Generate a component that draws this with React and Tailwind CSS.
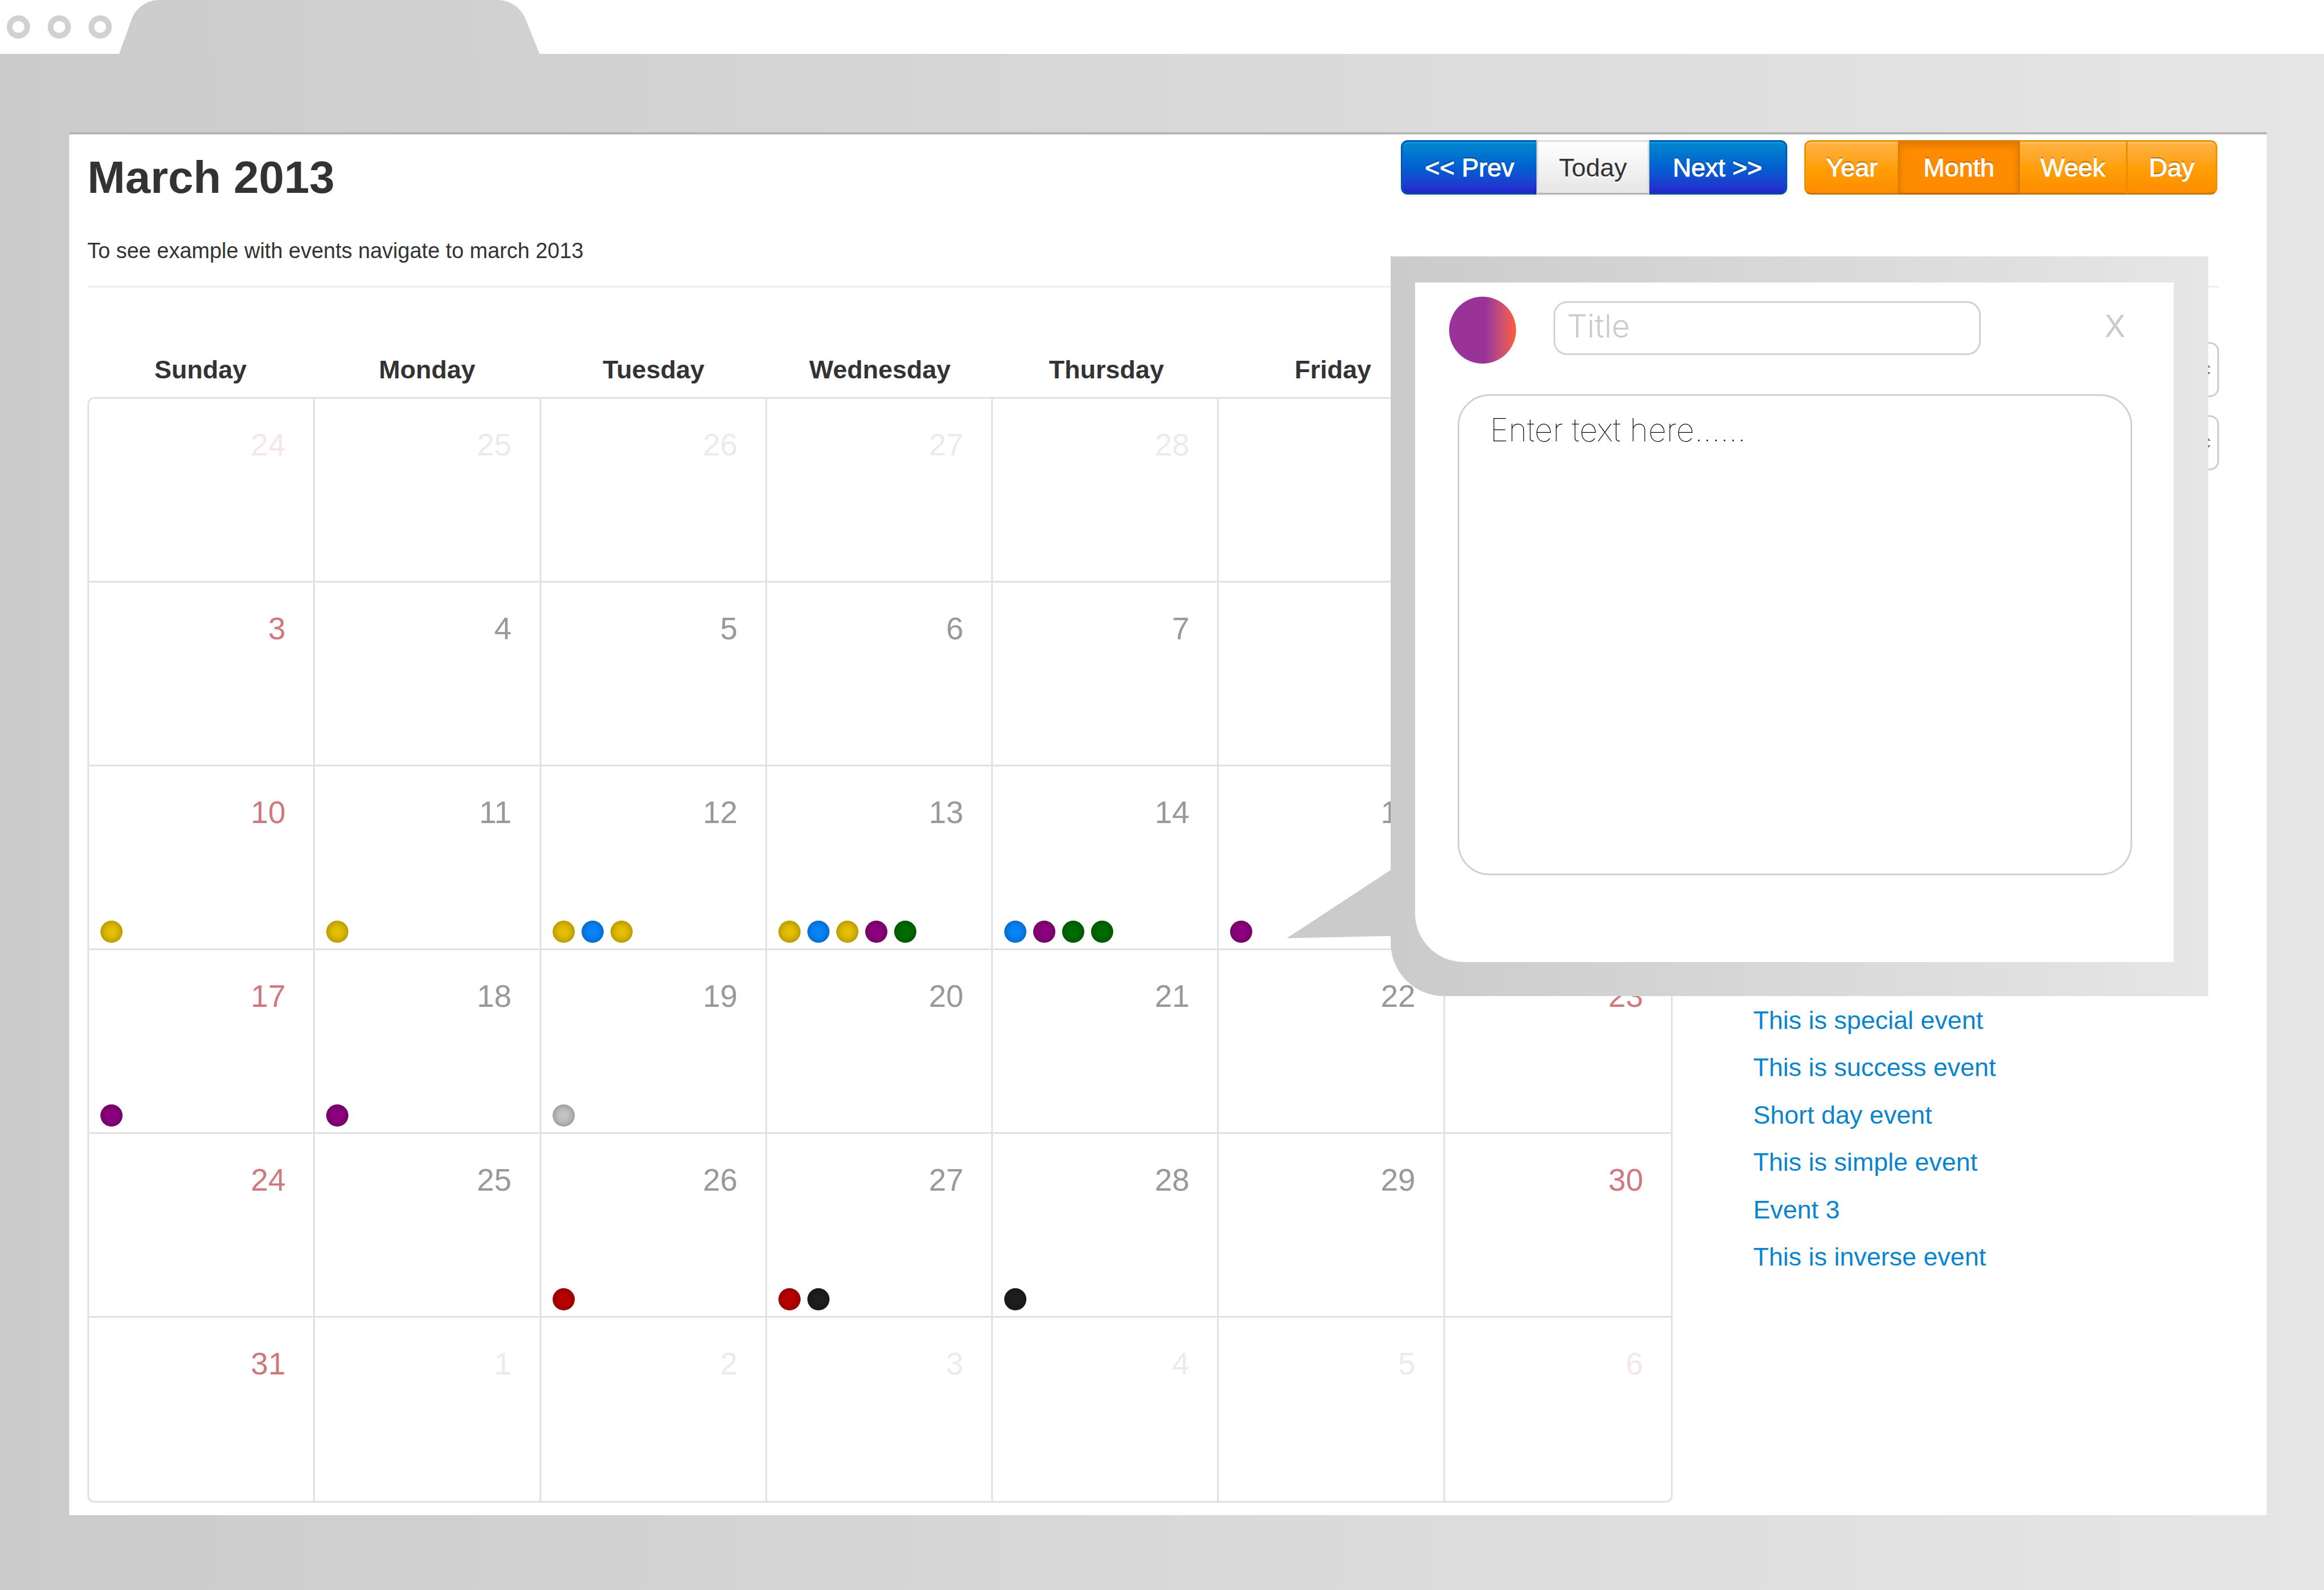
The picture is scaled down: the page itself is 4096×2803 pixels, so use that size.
const DAYS = ['Sunday', 'Monday', 'Tuesday', 'Wednesday', 'Thursday', 'Friday', 'Saturday'];

const DOT = {
  warning: 'bg-[#e9c200]',
  info: 'bg-[#0887ff]',
  special: 'bg-[#900080]',
  success: 'bg-[#006e00]',
  plain: 'bg-[#c7c7c7]',
  important: 'bg-[#bc0000]',
  inverse: 'bg-[#1f1f1f]',
};

const EVENTS = {
  10: ['warning'],
  11: ['warning'],
  12: ['warning', 'info', 'warning'],
  13: ['warning', 'info', 'warning', 'special', 'success'],
  14: ['info', 'special', 'success', 'success'],
  15: ['special'],
  17: ['special'],
  18: ['special'],
  19: ['plain'],
  26: ['important'],
  27: ['important', 'inverse'],
  28: ['inverse'],
};

// Six weeks starting on Sunday, 24 February 2013.
const WEEKS = Array.from({ length: 6 }, (_, w) =>
  Array.from({ length: 7 }, (_, d) => {
    const n = w * 7 + d - 4;
    const outside = n < 1 || n > 31;
    return {
      label: n < 1 ? n + 28 : n > 31 ? n - 31 : n,
      outside,
      weekend: d === 0 || d === 6,
      dots: outside ? [] : EVENTS[n] || [],
    };
  }),
);

const LINKS = [
  'This is special event',
  'This is success event',
  'Short day event',
  'This is simple event',
  'Event 3',
  'This is inverse event',
];

function numberColor({ outside, weekend }) {
  if (outside) return weekend ? 'text-[#f6e6e7]' : 'text-[#ebebeb]';
  return weekend ? 'text-[#d0787d]' : 'text-[#999999]';
}

function TabStrip() {
  return (
    <div className="flex h-[95px] shrink-0">
      <div className="flex w-[210px] items-center gap-[31px] pl-3">
        {[0, 1, 2].map((i) => (
          <span key={i} className="size-[41px] shrink-0 rounded-full border-[10px] border-[#d1d1d1]" />
        ))}
      </div>
      <svg width="741" height="95" viewBox="0 0 741 95" className="block shrink-0" aria-hidden="true">
        <defs>
          <linearGradient id="tab" x1="-210" x2="3886" y1="0" y2="0" gradientUnits="userSpaceOnUse">
            <stop offset="0" stopColor="#cbcbcb" />
            <stop offset="1" stopColor="#e6e6e6" />
          </linearGradient>
        </defs>
        <path d="M0 95 L22 34 C29 15 47 0 71 0 H667 C690 0 708 14 716 33 L741 95 Z" fill="url(#tab)" />
      </svg>
    </div>
  );
}

const BLUE =
  'bg-linear-to-b from-[#0088cc] via-[#0060d2] to-[#2323cc] text-white border-t-[#0055bb] border-b-[#004a9c] border-x-[#0057b8] shadow-[inset_0_3px_0_#0099dd,0_3px_6px_rgba(0,0,0,.05)] [text-shadow:0_-3px_0_rgba(0,0,0,.25)] [-webkit-text-stroke:1px_white]';
const LIGHT =
  'bg-linear-to-b from-white to-[#e6e6e6] text-[#333333] border-t-[#dcdcdc] border-b-[#b3b3b3] border-x-[#dcdcdc] shadow-[0_3px_6px_rgba(0,0,0,.05)] [text-shadow:0_3px_0_rgba(255,255,255,.75)]';
const ORANGE =
  'bg-linear-to-b from-[#ffb340] via-[#ff9f05] to-[#ff8c00] text-white border-t-[#e89300] border-b-[#c47600] border-x-[#ef9000] shadow-[inset_0_3px_0_#ffc067,0_3px_6px_rgba(0,0,0,.05)] [text-shadow:0_-3px_0_rgba(0,0,0,.25)] [-webkit-text-stroke:1px_white]';
const ACTIVE =
  'bg-[#ff8c00] text-white border-t-[#e07b00] border-b-[#c06600] border-x-[#e07b00] shadow-[inset_0_6px_13px_rgba(0,0,0,.15),0_3px_6px_rgba(0,0,0,.05)] [text-shadow:0_-3px_0_rgba(0,0,0,.25)] [-webkit-text-stroke:1px_white]';

function Button({ tone, className, children, ...rest }) {
  return (
    <button
      type="button"
      className={`h-24 border-y-[3px] pt-[2px] text-[45px] leading-[60px] whitespace-nowrap first:rounded-l-xl last:rounded-r-xl ${tone} ${className}`}
      {...rest}
    >
      {children}
    </button>
  );
}

function Header() {
  return (
    <header className="flex items-start justify-between border-b-[3px] border-[#eeeeee] pt-[10px]">
      <div className="pt-5">
        <h1 className="text-[80px] leading-[92px] font-bold text-[#333333]">March 2013</h1>
        <p className="mt-[55px] pb-[34px] text-[38px] leading-[56px] text-[#333333]">
          To see example with events navigate to march 2013
        </p>
      </div>
      <div className="flex gap-[30px] pr-[3px]">
        <div className="flex">
          <Button tone={BLUE} className="w-[239px] border-l-[3px]">&lt;&lt; Prev</Button>
          <Button tone={LIGHT} className="w-[199px] border-x-[3px]">Today</Button>
          <Button tone={BLUE} className="w-[243px] border-r-[3px]">Next &gt;&gt;</Button>
        </div>
        <div className="flex">
          <Button tone={ORANGE} className="w-[165px] border-l-[3px]">Year</Button>
          <Button tone={ACTIVE} className="w-[215px] border-x-[3px]" aria-pressed="true">Month</Button>
          <Button tone={ORANGE} className="w-[190px] border-r-[3px]">Week</Button>
          <Button tone={ORANGE} className="w-[158px] border-r-[3px]">Day</Button>
        </div>
      </div>
    </header>
  );
}

function Calendar() {
  return (
    <div className="flex flex-[2794] flex-col pt-[17px]">
      <div className="grid grid-cols-7 pb-4 text-center text-[45px] leading-[64px] font-bold text-[#333333]">
        {DAYS.map((d) => (
          <div key={d}>{d}</div>
        ))}
      </div>
      <div className="overflow-hidden rounded-xl border-[3px] border-[#e1e1e1]">
        {WEEKS.map((week, w) => (
          <div key={w} className="grid h-[324px] grid-cols-7 border-b-[3px] border-[#e1e1e1] last:h-[323px] last:border-b-0">
            {week.map((day, d) => (
              <div
                key={d}
                className="flex flex-col justify-between border-r-[3px] border-[#e1e1e1] pt-[49px] pr-[49px] pb-[10px] pl-5 last:border-r-0"
              >
                <span className={`text-right text-[55px] leading-[64px] ${numberColor(day)}`}>{day.label}</span>
                <div className="flex gap-3">
                  {day.dots.map((kind, i) => (
                    <span
                      key={i}
                      className={`size-[39px] shrink-0 rounded-full shadow-[inset_0_0_16px_rgba(0,0,0,.35)] ${DOT[kind]}`}
                    />
                  ))}
                </div>
              </div>
            ))}
          </div>
        ))}
      </div>
    </div>
  );
}

function Picker({ label, value }) {
  return (
    <div className="flex h-[97px] items-center rounded-2xl border-[3px] border-[#cccccc] bg-white pr-3 pl-5">
      <select
        aria-label={label}
        defaultValue={value}
        className="min-w-0 flex-1 appearance-none bg-transparent text-[45px] leading-[60px] text-[#555555]"
      >
        <option value={value}>{value}</option>
      </select>
      <svg width="24" height="36" viewBox="0 0 24 36" fill="#666666" aria-hidden="true">
        <path d="M12 0 L24 14 H0 Z M12 36 L24 22 H0 Z" />
      </svg>
    </div>
  );
}

function Sidebar() {
  return (
    <aside className="flex flex-[886] flex-col justify-between pb-[391px]">
      <div className="flex flex-col gap-8">
        <Picker label="First day of week" value="" />
        <Picker label="Language" value="" />
      </div>
      <ul className="grid h-[501px] grid-rows-6 pl-[65px] text-[45px]">
        {LINKS.map((t) => (
          <li key={t} className="flex items-center leading-[60px]">
            <a href="#event" className="text-[#0b84d0]">{t}</a>
          </li>
        ))}
      </ul>
    </aside>
  );
}

function EventPopup() {
  return (
    <div
      role="dialog"
      aria-label="New event"
      className="absolute top-[215px] right-[103px] w-[1441px] rounded-bl-[94px] bg-linear-to-r from-[#cbcbcb] to-[#e6e6e6] pt-[46px] pr-[61px] pb-[60px] pl-[43px] font-[Inter,sans-serif]"
    >
      <svg width="184" height="122" viewBox="0 0 184 122" className="absolute top-[1081px] -left-[183px]" aria-hidden="true">
        <path d="M0 121 L184 0 V117 Z" fill="#cbcbcb" />
      </svg>
      <div className="flex flex-col rounded-bl-[86px] bg-white pt-[25px] pr-[73px] pb-[153px] pl-[60px]">
        <div className="flex items-start">
          <span className="mr-[66px] size-[118px] shrink-0 rounded-full bg-linear-to-r from-[#993399] from-55% to-[#ff5e30]" />
          <input
            type="text"
            aria-label="Title"
            placeholder="Title"
            className="mt-2 h-[95px] w-[753px] rounded-3xl border-[3px] border-[#d1d1d1] bg-white px-[21px] pb-2 text-[56px] leading-[80px] font-light placeholder:text-[#cbcbcb]"
          />
          <button type="button" aria-label="Close" className="mt-4 mr-3 ml-auto text-[54px] leading-[72px] text-[#cbcbcb]">
            X
          </button>
        </div>
        <textarea
          aria-label="Event text"
          placeholder="Enter text here......"
          className="mt-[54px] ml-[15px] h-[848px] resize-none rounded-[56px] border-[3px] border-[#d1d1d1] bg-white px-[54px] py-5 text-[56px] leading-[80px] font-thin placeholder:text-black"
        />
      </div>
    </div>
  );
}

export default function App() {
  return (
    <div className="flex min-h-screen flex-col bg-white font-['Liberation_Sans',Arial,sans-serif]">
      <TabStrip />
      <div className="flex-1 bg-linear-to-r from-[#cbcbcb] to-[#e6e6e6] pt-[138px] pr-[101px] pb-[132px] pl-[122px]">
        <main className="relative border-t-4 border-[#b5b5b5] bg-white pr-[84px] pb-[22px] pl-8">
          <Header />
          <div className="flex gap-[77px] pt-[96px]">
            <Calendar />
            <Sidebar />
          </div>
          <EventPopup />
        </main>
      </div>
    </div>
  );
}
